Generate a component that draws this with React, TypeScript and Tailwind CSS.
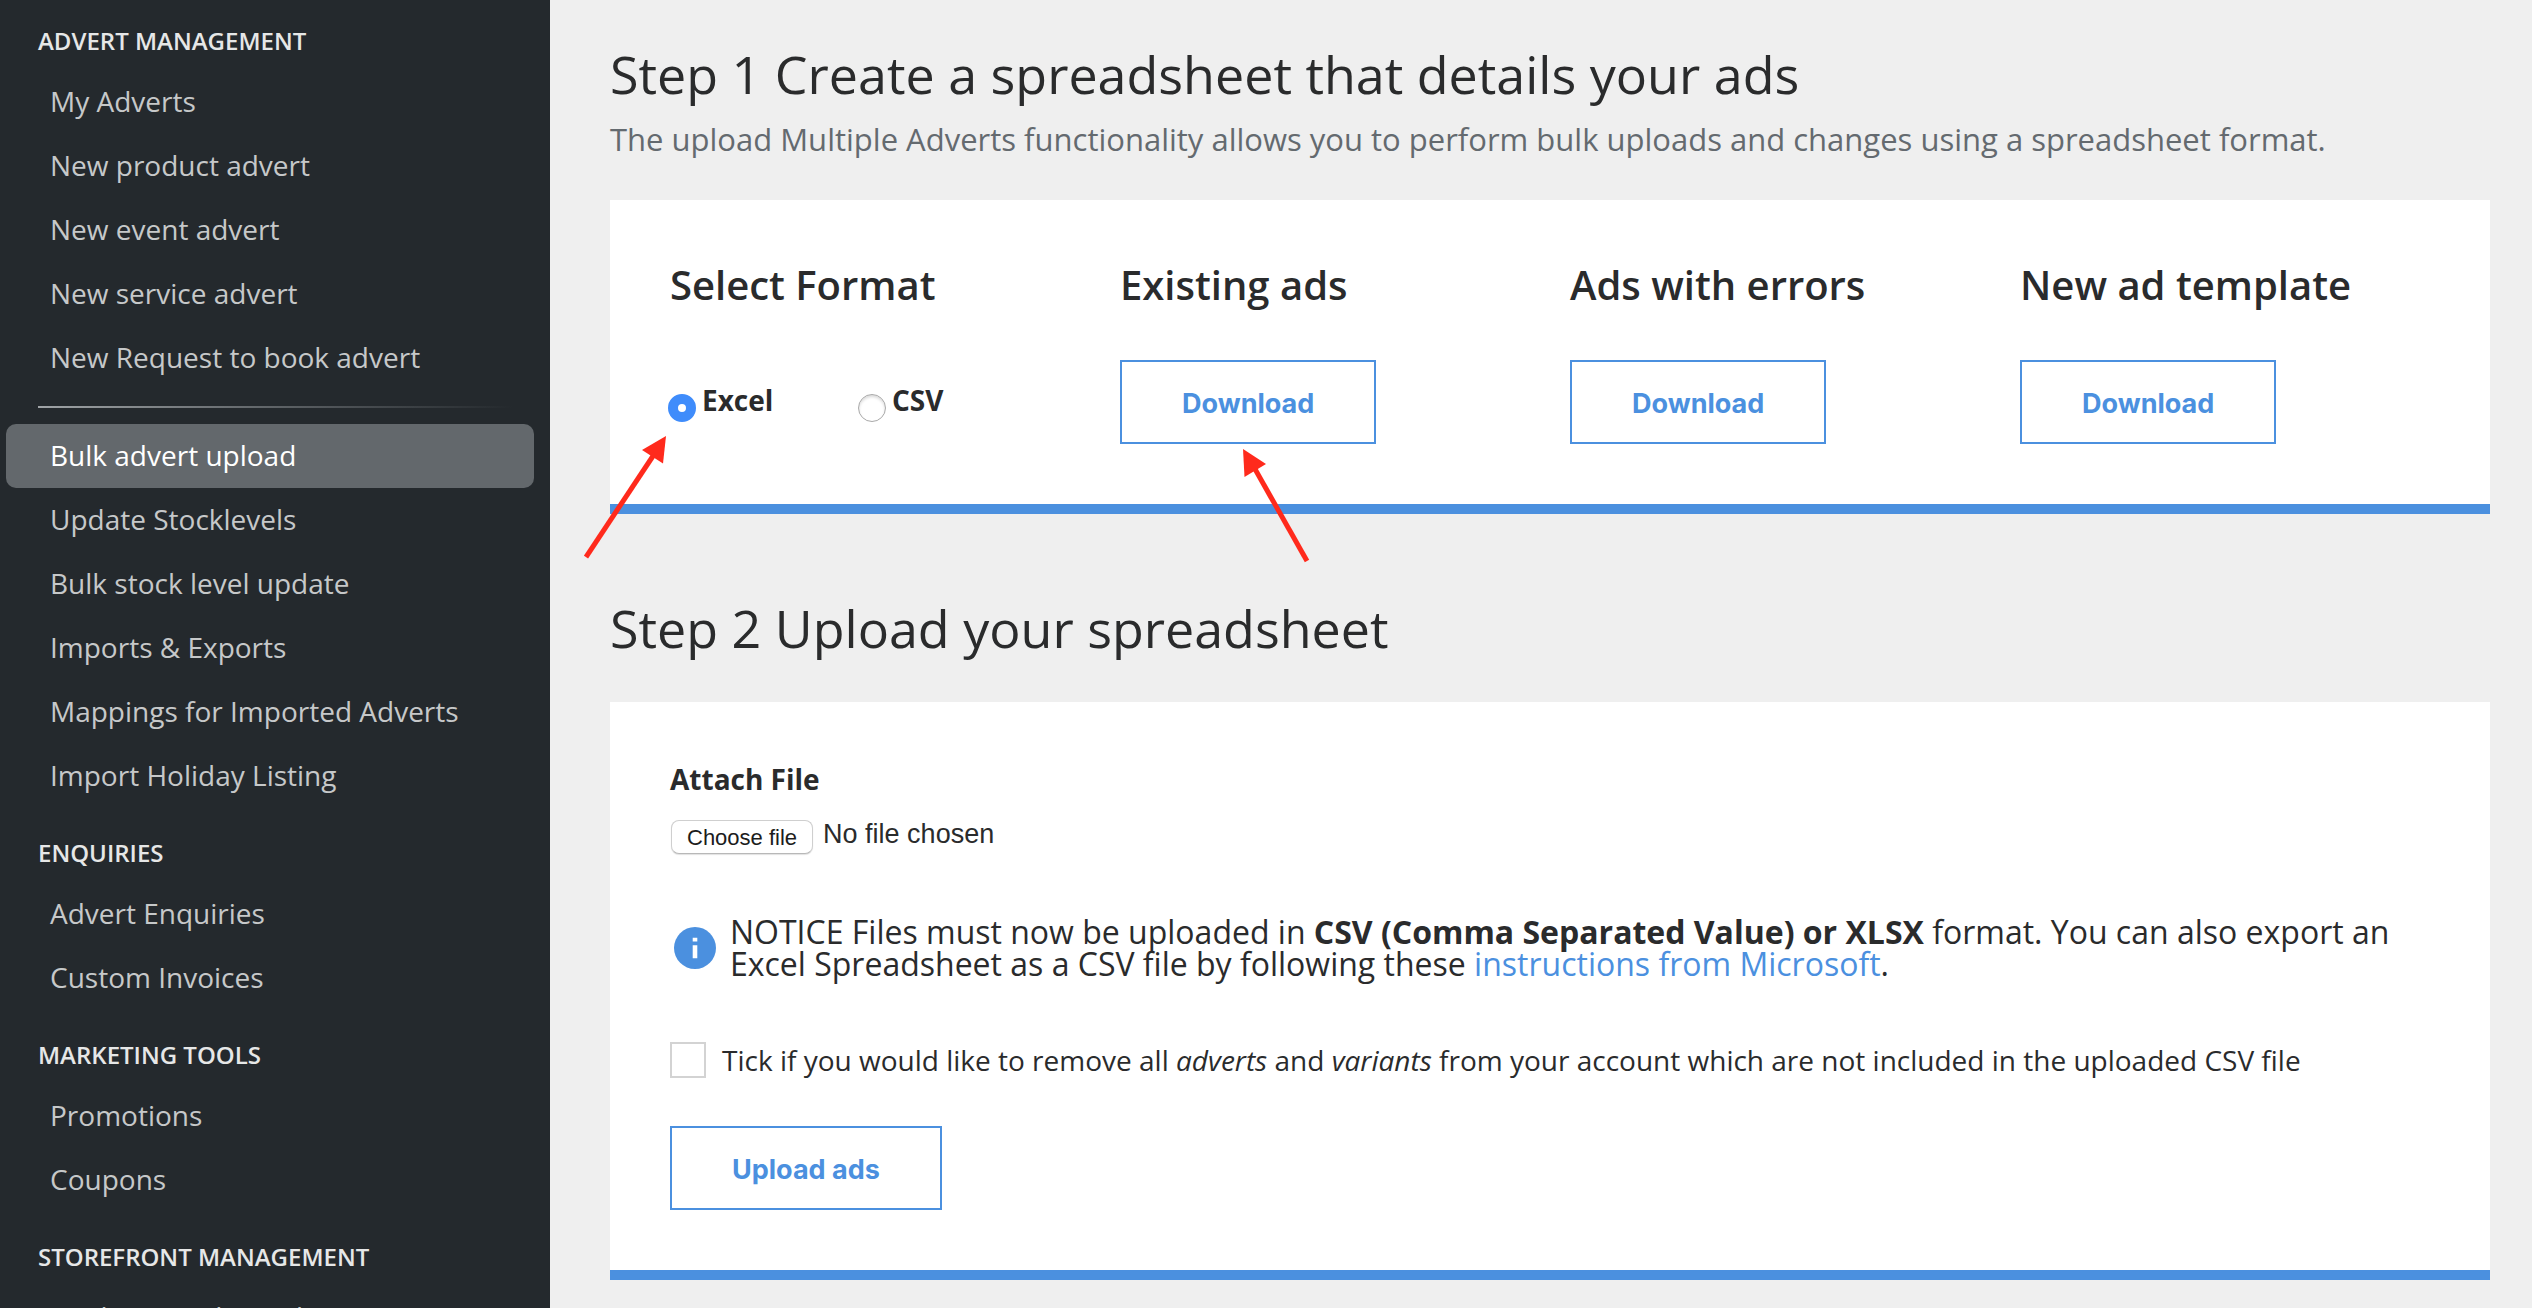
import React from 'react';

type Entry = { label: string; active?: boolean };
type Section = { title: string; groups: Entry[][] };

const sections: Section[] = [
  {
    title: 'ADVERT MANAGEMENT',
    groups: [
      [
        { label: 'My Adverts' },
        { label: 'New product advert' },
        { label: 'New event advert' },
        { label: 'New service advert' },
        { label: 'New Request to book advert' },
      ],
      [
        { label: 'Bulk advert upload', active: true },
        { label: 'Update Stocklevels' },
        { label: 'Bulk stock level update' },
        { label: 'Imports & Exports' },
        { label: 'Mappings for Imported Adverts' },
        { label: 'Import Holiday Listing' },
      ],
    ],
  },
  { title: 'ENQUIRIES', groups: [[{ label: 'Advert Enquiries' }, { label: 'Custom Invoices' }]] },
  { title: 'MARKETING TOOLS', groups: [[{ label: 'Promotions' }, { label: 'Coupons' }]] },
  { title: 'STOREFRONT MANAGEMENT', groups: [[{ label: 'Analytics and social' }]] },
];

const buttonClass =
  "h-[84px] cursor-pointer border-2 border-[#4b90df] bg-white px-15 pt-1 font-['Inter','Liberation_Sans',sans-serif] text-[27px] font-bold text-[#4b90df]";

function Sidebar() {
  return (
    <nav className="w-[550px] shrink-0 bg-[#24292d]">
      {sections.map((section, s) => (
        <section key={section.title} className={s === 0 ? '-mt-1' : ''}>
          <h2 className="px-[38px] pt-7 pb-3 text-2xl leading-[34px] font-semibold text-[#e6e7e7]">
            {section.title}
          </h2>
          {section.groups.map((group, g) => (
            <React.Fragment key={g}>
              {g > 0 && (
                <hr className="mx-[38px] my-4 h-0.5 border-0 bg-linear-to-r from-[#a0a4a7] to-[#24292d]" />
              )}
              <ul className="pr-4 pl-1.5">
                {group.map((entry) => (
                  <li key={entry.label}>
                    <a
                      href="#"
                      className={
                        entry.active
                          ? 'block rounded-[10px] bg-[#63686c] px-11 pb-0.5 text-[28px] leading-[62px] text-white'
                          : 'block rounded-[10px] px-11 pb-0.5 text-[28px] leading-[62px] text-[#c6c8c9]'
                      }
                    >
                      {entry.label}
                    </a>
                  </li>
                ))}
              </ul>
            </React.Fragment>
          ))}
        </section>
      ))}
    </nav>
  );
}

function FormatOption({ label, checked }: { label: string; checked?: boolean }) {
  return (
    <label className="flex w-[190px] items-start gap-1.5 text-[28px] leading-9 font-bold">
      <input
        type="radio"
        name="format"
        defaultChecked={checked}
        className="mt-3 size-7 shrink-0 appearance-none rounded-full border border-[#a9a9a9] bg-white shadow-[inset_0_2px_3px_rgba(0,0,0,0.15)] checked:border-[10px] checked:border-[#3f8cfb] checked:shadow-none"
      />
      {label}
    </label>
  );
}

function Arrow({ className, flip }: { className: string; flip?: boolean }) {
  return (
    <svg aria-hidden="true" width="84" height="126" viewBox="0 0 84 126" className={className}>
      {flip ? (
        <>
          <path d="M13 20 L65 112" stroke="#ff2a1c" strokeWidth="5" />
          <path d="M1 0 L24 15 L2.5 28 Z" fill="#ff2a1c" />
        </>
      ) : (
        <>
          <path d="M2 121 L69 20" stroke="#ff2a1c" strokeWidth="5" />
          <path d="M82 0 L58 14 L79 27.5 Z" fill="#ff2a1c" />
        </>
      )}
    </svg>
  );
}

function DownloadColumn({ title, children }: { title: string; children?: React.ReactNode }) {
  return (
    <div>
      <h3 className="mb-[50px] text-[40px] leading-[50px] font-semibold">{title}</h3>
      <div className="relative inline-block">
        <button type="button" className={buttonClass}>
          Download
        </button>
        {children}
      </div>
    </div>
  );
}

export default function App() {
  return (
    <div className="flex h-screen overflow-hidden bg-[#efefef] font-['Open_Sans','Noto_Sans',sans-serif] text-[#2a2b2c]">
      <Sidebar />
      <main className="min-w-0 flex-1 pr-[42px] pl-15">
        <h1 className="pt-[39px] text-[52px] leading-[70px]">Step 1 Create a spreadsheet that details your ads</h1>
        <p className="mt-[9px] mb-10 text-[31px] leading-[42px] text-[#646a6f]">
          The upload Multiple Adverts functionality allows you to perform bulk uploads and changes using a spreadsheet
          format.
        </p>
        <section className="grid grid-cols-4 gap-10 border-b-10 border-[#4b90df] bg-white p-15">
          <fieldset>
            <legend className="mb-[72px] text-[40px] leading-[50px] font-semibold">Select Format</legend>
            <div className="relative -ml-0.5 flex">
              <FormatOption label="Excel" checked />
              <FormatOption label="CSV" />
              <Arrow className="absolute top-[54px] -left-[84px]" />
            </div>
          </fieldset>
          <DownloadColumn title="Existing ads">
            <Arrow flip className="absolute top-[89px] left-[122px]" />
          </DownloadColumn>
          <DownloadColumn title="Ads with errors" />
          <DownloadColumn title="New ad template" />
        </section>

        <h1 className="mt-[78px] mb-[38px] text-[52px] leading-[72px]">Step 2 Upload your spreadsheet</h1>
        <section className="border-b-10 border-[#4b90df] bg-white p-15">
          <h4 className="text-[28px] leading-[34px] font-bold">Attach File</h4>
          <div className="mt-6 flex h-[34px] items-start gap-2.5 pl-px font-['Liberation_Sans',sans-serif]">
            <label className="h-[34px] cursor-pointer rounded-lg border border-[#cfcfcf] border-b-[#b8b8b8] bg-white px-[15px] text-[22px] leading-[34px] text-[#1c1c1c] shadow-[0_1px_1px_rgba(0,0,0,0.12)]">
              Choose file
              <input type="file" className="sr-only" />
            </label>
            <span className="text-[27px] leading-7">No file chosen</span>
          </div>
          <div className="mt-[62px] flex items-center gap-3.5">
            <svg aria-hidden="true" viewBox="0 0 42 42" className="ml-1 size-[42px] shrink-0">
              <circle cx="21" cy="21" r="21" fill="#4b90df" />
              <path d="M18.7 10.7h4.6v3.8h-4.6zM18.7 18.3h4.6v13h-4.6z" fill="#fff" />
            </svg>
            <p className="text-[32px] leading-8">
              NOTICE Files must now be uploaded in <b>CSV (Comma Separated Value) or XLSX</b> format. You can also
              export an Excel Spreadsheet as a CSV file by following these{' '}
              <a href="#" className="text-[#4b90df]">
                instructions from Microsoft
              </a>
              .
            </p>
          </div>
          <label className="mt-[62px] flex items-center gap-4 text-[28px] leading-9">
            <input type="checkbox" className="size-9 shrink-0 appearance-none border-2 border-[#d3d3d3] bg-white" />
            <span>
              Tick if you would like to remove all <i>adverts</i> and <i>variants</i> from your account which are not
              included in the uploaded CSV file
            </span>
          </label>
          <button type="button" className={`mt-12 block ${buttonClass}`}>
            Upload ads
          </button>
        </section>
      </main>
    </div>
  );
}
